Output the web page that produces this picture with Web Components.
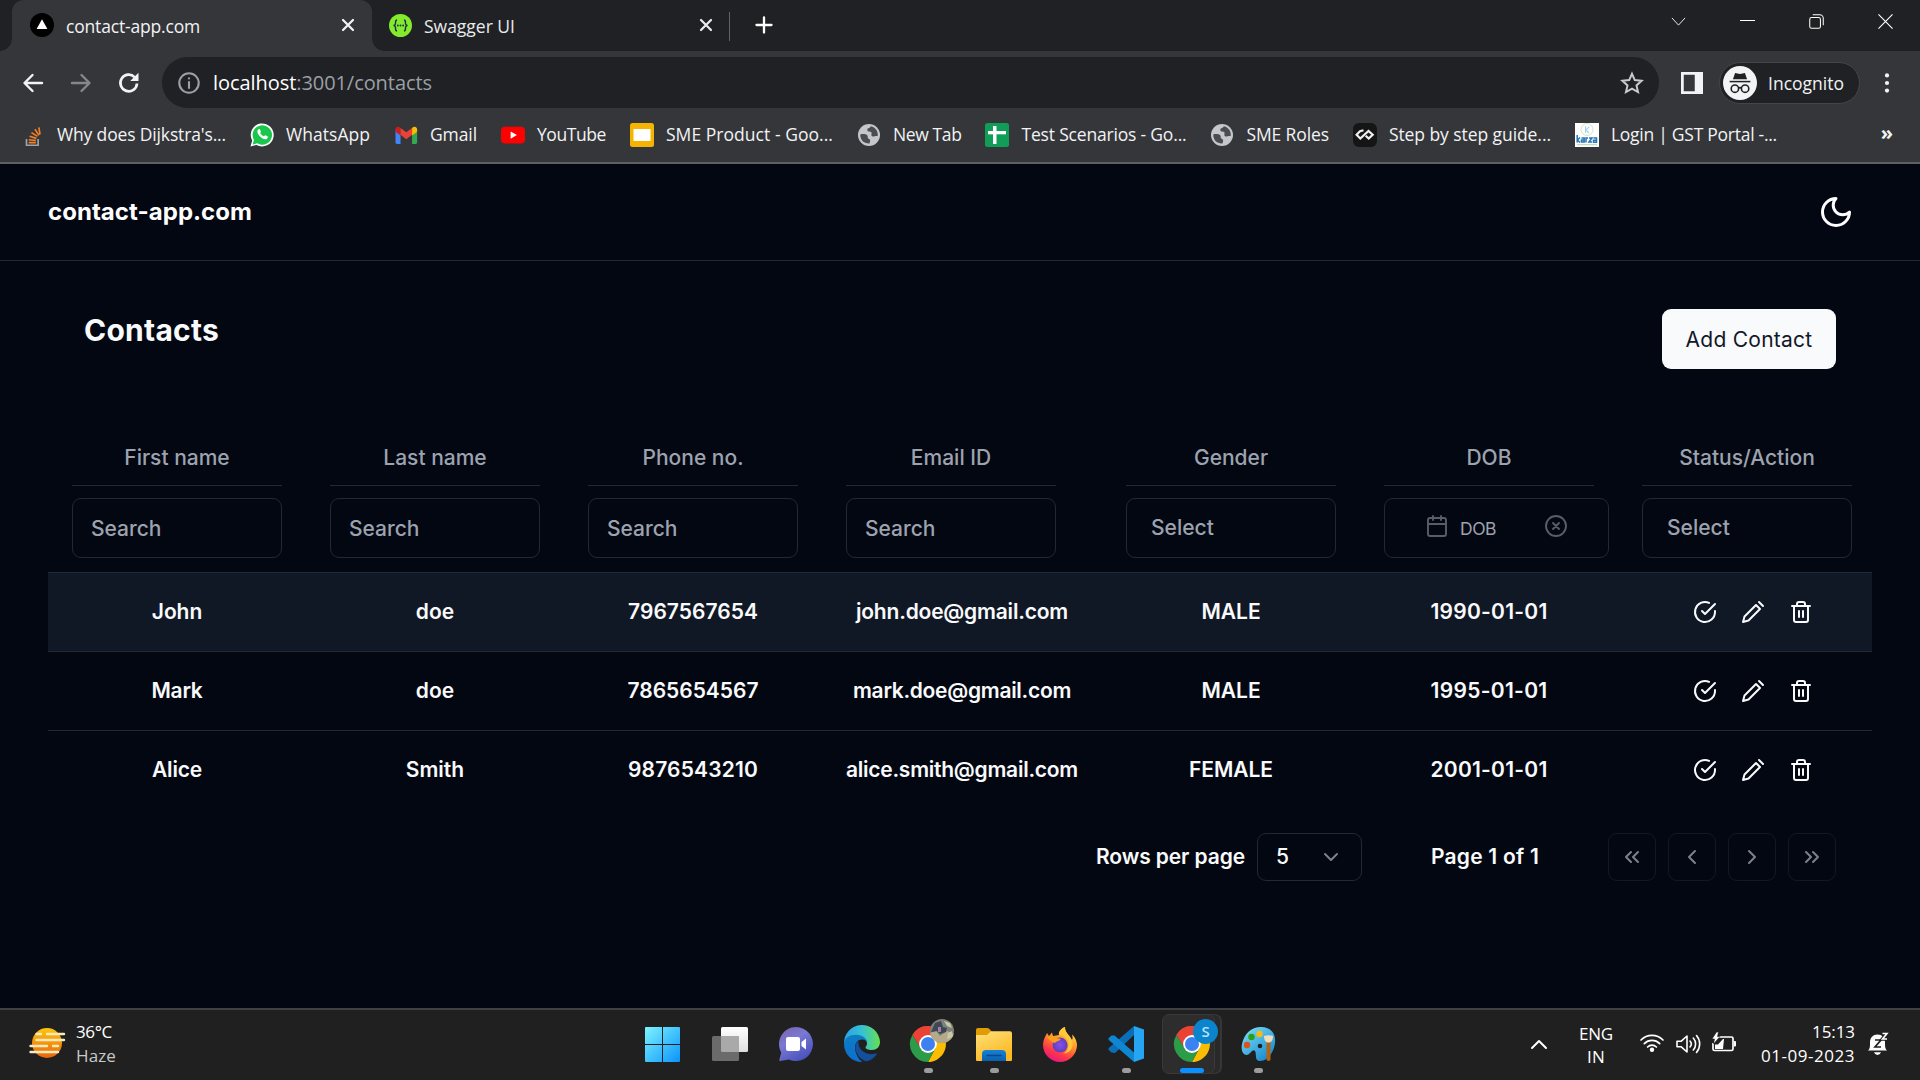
<!DOCTYPE html>
<html lang="en">
<head>
<meta charset="utf-8">
<title>contact-app.com</title>
<style>
html,body{margin:0;height:100%;background:#030712;overflow:hidden}
</style>
</head>
<body>
<desktop-screen></desktop-screen>
<script>
const stroke = (body, w = 2, vb = '0 0 24 24') => `<svg viewBox="${vb}" fill="none" stroke="currentColor" stroke-width="${w}" stroke-linecap="round" stroke-linejoin="round">${body}</svg>`;
const plain = (body, vb = '0 0 24 24') => `<svg viewBox="${vb}">${body}</svg>`;
const chromeLogo = `
<path d="M18 18 2.4 9A18 18 0 0 1 33.6 9Z" fill="#ea4335"/>
<path d="M18 9.5H33.8L33.6 9A18 18 0 0 0 2.4 9L10.6 22.3Z" fill="#ea4335"/>
<path d="M33.8 9.5H18L25.4 22.3 18 36A18 18 0 0 0 33.8 9.5Z" fill="#fbbc04"/>
<path d="M2.4 9 10.6 22.3A8.5 8.5 0 0 0 25 22.8L18 36A18 18 0 0 1 2.4 9Z" fill="#2d9c49"/>
<circle cx="18" cy="18" r="8.9" fill="#fff"/><circle cx="18" cy="18" r="7" fill="#3b82f0"/>`;
const ICONS = {
  vercel: plain('<circle cx="12" cy="12" r="12" fill="#000"/><path d="M12 6.2 17.4 16H6.6Z" fill="#fff"/>'),
  swagger: plain('<circle cx="12" cy="12" r="12" fill="#85ea2d"/><path d="M8.4 6.2C6.3 6.2 7 8.6 6.7 10.2 6.5 11.4 5.6 12 4.6 12 5.6 12 6.5 12.6 6.7 13.8 7 15.4 6.3 17.8 8.4 17.8M15.6 6.2C17.7 6.2 17 8.6 17.3 10.2 17.5 11.4 18.4 12 19.4 12 18.4 12 17.5 12.6 17.3 13.8 17 15.4 17.7 17.8 15.6 17.8" fill="none" stroke="#173647" stroke-width="1.5"/><g fill="#173647"><circle cx="9.2" cy="12" r="1"/><circle cx="12" cy="12" r="1"/><circle cx="14.8" cy="12" r="1"/></g>'),
  close: stroke('<path d="m6 6 12 12M18 6 6 18"/>', 2.7),
  plus: stroke('<path d="M12 3v18M3 12h18"/>', 2.8),
  back: stroke('<path d="M21 12H4M11.5 4 3.5 12l8 8"/>', 2.4),
  forward: stroke('<path d="M3 12h17M12.5 4l8 8-8 8"/>', 2.4),
  reload: plain('<path d="M20 12.5A8.3 8.3 0 1 1 17.6 6.1" fill="none" stroke="#f1f3f4" stroke-width="2.7"/><path d="M21.5 1.8V10h-8.3Z" fill="#f1f3f4"/>'),
  info: stroke('<circle cx="12" cy="12" r="10.6"/><path d="M12 11v6.5M12 6.8v.3"/>', 2.3),
  star: plain('<path d="m12 2.8 2.8 6.3 6.8.7-5.1 4.6 1.5 6.7-6-3.5-6 3.5 1.5-6.7-5.1-4.6 6.8-.7Z" fill="none" stroke="#c8cacd" stroke-width="2"/>'),
  panel: plain('<path d="M0 0h24v24H0ZM3 3v18h12V3Z" fill="#f1f3f4" fill-rule="evenodd"/>'),
  incognito: plain('<circle cx="18" cy="18" r="18" fill="#f1f3f4"/><path d="M12.8 7.3 18 8.5l5.2-1.2L25.5 14h-15Z" fill="#202124"/><path d="M7 16.5h22" stroke="#202124" stroke-width="1.6"/><g fill="none" stroke="#202124" stroke-width="1.7"><circle cx="12.6" cy="24" r="3.9"/><circle cx="23.4" cy="24" r="3.9"/><path d="M16.4 23.4q1.6-1 3.2 0"/></g>', '0 0 36 36'),
  dots: plain('<g fill="#f1f3f4"><circle cx="12" cy="3.7" r="2.3"/><circle cx="12" cy="12" r="2.3"/><circle cx="12" cy="20.3" r="2.3"/></g>'),
  winDown: plain('<path d="m.7 1 7.3 8L15.3 1" fill="none" stroke="#e8eaed" stroke-width="1.1"/>', '0 0 16 10'),
  winMin: plain('<path d="M0 4.5h15" stroke="#fff" stroke-width="1"/>', '0 0 15 10'),
  winMax: plain('<g fill="none" stroke="#fff" stroke-width="1.1"><rect x=".8" y="3.8" width="11.4" height="11.4" rx="2"/><path d="M4 .8h7.5a3.7 3.7 0 0 1 3.7 3.7V12"/></g>', '0 0 16 16'),
  winClose: plain('<path d="m.5.5 15 15M15.5.5l-15 15" stroke="#fff" stroke-width="1.2"/>', '0 0 16 16'),
  stack: plain('<g transform="translate(2.6 3.6) scale(.83)"><path d="M3.5 15v7.5h14V15" fill="none" stroke="#9da3a8" stroke-width="2"/><g stroke="#f48024" stroke-width="2"><path d="M6.2 19.3h8.6M6.3 15.8l8.5 1M7.2 11.7l8.2 2.5M9.5 7.2l7.2 4.6M13.6 3.3l5 7M18.4 1l1.4 8.3"/></g></g>'),
  whatsapp: plain('<path d="M.5 23.5 2.2 17.6A11.5 11.5 0 1 1 6.5 21.9Z" fill="#fff"/><path d="M2.6 21.5 4 17A9.7 9.7 0 1 1 7.3 20.3Z" fill="#1bc64c"/><path d="M8.5 6.3c.6-.5 1.3-.4 1.5.1l.9 2.1c.2.6-.9 1.3-.6 1.8.8 1.4 1.9 2.4 3.3 3 .6.3 1.2-1.2 1.8-1l2.1 1c.9.5 0 2.5-1.1 2.9-3.5 1.2-9.1-4.2-9-7.6 0-1 .5-1.8 1.1-2.3Z" fill="#fff"/>'),
  gmail: plain('<g transform="translate(1.5 1.5) scale(.9)"><path d="M0 5.5V20a1.6 1.6 0 0 0 1.6 1.6h4V11Z" fill="#4285f4"/><path d="M24 5.5V20a1.6 1.6 0 0 1-1.6 1.6h-4V11Z" fill="#34a853"/><path d="M5.6 4v8.3L0 8V5.5C0 2.5 3 1.8 5 3.3Z" fill="#c5221f"/><path d="M18.4 4v8.3L24 8V5.5c0-3-3-3.7-5-2.2Z" fill="#fbbc04"/><path d="M5.6 3.8 12 8.6l6.4-4.8v7.7L12 16.3l-6.4-4.8Z" fill="#ea4335"/></g>'),
  youtube: plain('<rect y="3.7" width="24" height="16.8" rx="4" fill="#f00"/><path d="m9.6 8.5 6.3 3.6-6.3 3.6Z" fill="#fff"/>'),
  slides: plain('<rect width="24" height="24" rx="2.5" fill="#f5b400"/><rect x="3.5" y="6" width="17" height="12" fill="#fff"/>'),
  globe: plain('<circle cx="12" cy="12" r="11" fill="#c3c6ca"/><path d="M3.3 11.5c1.7-.8 5.9-.6 7.1 1.1.9 1.4-.5 2.4 1.4 3.2 1.8.7 1.6 2.6.6 4.7C6.7 20.7 3 16.8 3.3 11.5ZM13.8 3.2c-.4 1.2-1.2 1.7-2.5 2.1-1.3.4-1.1 1.8-.6 2.7.6 1.1 2.8.2 3.6 1.3.9 1.3-.8 3 .9 4 1.3.8 2.9-.7 5.5-.3C21.4 8.5 18.6 4.3 13.8 3.2Z" fill="#4a4c50"/>'),
  sheets: plain('<rect width="24" height="24" rx="2.5" fill="#0f9d58"/><path d="M8 3h3.5v18H8Z" fill="#fff"/><path d="M3 8h18v3.3H3Z" fill="#fff"/>'),
  step: plain('<rect width="24" height="24" rx="6" fill="#151515"/><path d="M10.5 7.3 7 8.3 3.6 11.8 7.3 15.5 15.5 8l4.2 3.8-4 3.8-3-2.8" fill="none" stroke="#f0f0f0" stroke-width="2.2"/>'),
  karza: plain('<rect width="24" height="24" fill="#fff"/><circle cx="12" cy="6.5" r="6" fill="none" stroke="#d3e6c5"/><path d="M10.5 3v7M14 4l-3 3 3 3" fill="none" stroke="#a5d3ec" stroke-width="1.1"/><path d="M2.2 12v7.5M5 14.5 2.5 17l2.5 2.5M6.5 15h2.7v4H6.5v-2h2.5M11 19.5v-4.5h2M14 15h3l-3 4h3M18.5 15h3v4.2h-3v-2h3" fill="none" stroke="#2676b5" stroke-width="1.5"/><path d="M2 21.7h20" stroke="#b8d5a6"/>'),
  moon: stroke('<path d="M12 3a6 6 0 0 0 9 9 9 9 0 1 1-9-9Z"/>'),
  check: stroke('<path d="M22 11.08V12a10 10 0 1 1-5.93-9.14"/><path d="m9 11 3 3L22 4"/>'),
  pencil: stroke('<path d="m18 2 4 4M7.5 20.5 19 9l-4-4L3.5 16.5 2 22Z"/>'),
  trash: stroke('<path d="M3 6h18M19 6v14c0 1-1 2-2 2H7c-1 0-2-1-2-2V6M8 6V4c0-1 1-2 2-2h4c1 0 2 1 2 2v2M10 11v6M14 11v6"/>'),
  calendar: stroke('<rect x="3" y="4" width="18" height="18" rx="2"/><path d="M16 2v4M8 2v4M3 10h18"/>', 1.9),
  clear: stroke('<circle cx="12" cy="12" r="10"/><path d="m15 9-6 6M9 9l6 6"/>', 1.9),
  down: stroke('<path d="m6 9 6 6 6-6"/>'),
  first: stroke('<path d="m11 17-5-5 5-5M18 17l-5-5 5-5"/>'),
  prev: stroke('<path d="m15 18-6-6 6-6"/>'),
  next: stroke('<path d="m9 18 6-6-6-6"/>'),
  last: stroke('<path d="m13 17 5-5-5-5M6 17l5-5-5-5"/>'),
  haze: plain('<defs><linearGradient id="a" x2="0" y2="1"><stop stop-color="#fdc60f"/><stop offset="1" stop-color="#e8650a"/></linearGradient></defs><circle cx="18" cy="15" r="15" fill="url(#a)"/><g stroke="#fbe9bd" stroke-width="2.4" stroke-linecap="round"><path d="M7.5 6H12M18 6h17M7.5 12H35M1.5 18H18M24 18h5M1.5 24H29"/></g>', '0 0 37 31'),
  windows: plain('<defs><linearGradient id="a" gradientUnits="userSpaceOnUse" x2="35" y2="35"><stop stop-color="#7df3ff"/><stop offset="1" stop-color="#0a94fb"/></linearGradient></defs><path d="M0 1q0-1 1-1h16v17H0ZM18 0h16q1 0 1 1v16H18ZM0 18h17v17H1q-1 0-1-1ZM18 18h17v16q0 1-1 1H18Z" fill="url(#a)"/>', '0 0 35 35'),
  tasks: plain('<defs><linearGradient id="a" x2="0" y2="1"><stop stop-color="#fff"/><stop offset="1" stop-color="#dedede"/></linearGradient></defs><rect x="9" width="27" height="25" rx="1.5" fill="url(#a)"/><rect y="9" width="27" height="25" rx="1.5" fill="#6b6b6b"/><path d="M9 9h18v16H10.5Q9 25 9 23.5Z" fill="#a9a9a9"/>', '0 0 36 34'),
  chat: plain('<defs><linearGradient id="a" x2=".6" y2="1"><stop stop-color="#7b5fa8"/><stop offset=".45" stop-color="#7a79d4"/><stop offset="1" stop-color="#4b53bc"/></linearGradient></defs><path d="M17 0a17 17 0 1 1-7 32.5L1 34q-1 0-.7-1.2L2.3 25.5A17 17 0 0 1 17 0Z" fill="url(#a)"/><rect x="7" y="10" width="14" height="14" rx="2" fill="#fff"/><path d="m22.5 15 4.5-3.5v11L22.5 19Z" fill="#fff"/>', '0 0 34 34'),
  edge: plain('<defs><linearGradient id="a"><stop stop-color="#28a3e8"/><stop offset=".5" stop-color="#35c1d3"/><stop offset="1" stop-color="#66e04f"/></linearGradient><linearGradient id="b" x2="0" y2="1"><stop stop-color="#0f7cc2"/><stop offset="1" stop-color="#0c6fd0"/></linearGradient></defs><path d="M0 18A18 18 0 0 1 36 16c0 5-3.5 8-8 8-4 0-6.5-1.2-6.5-2.5 0-1 1.5-1.5 1.5-4C23 13 18 9.5 12 9.5S2 13 0 18Z" fill="url(#a)"/><path d="M0 18C0 12 6 8.8 12 8.8c7 0 11 4.2 11 8.2 0-2-2.5-3.5-5-3.5-4 0-7 3.5-7 8C11 29 17 36 19 36 8 36.5 0 28 0 18Z" fill="url(#b)"/><path d="M14.5 15c-3 2-4 6-2.5 10.5 2 6 8 10 11 9.8 4-1 8-4 10.5-8.3-3 1.2-7 1.7-10.5.5-5-1.5-9-6-8.5-12.5Z" fill="#124f9c"/>', '0 0 36 36'),
  chrome: plain(chromeLogo, '0 0 36 36'),
  avatar: plain('<defs><clipPath id="c"><circle cx="12" cy="12" r="12"/></clipPath></defs><g clip-path="url(#c)"><path fill="#7d8179" d="M0 0h24v24H0Z"/><path fill="#b5a98c" d="M0 14 6 12 10 17 17 12 24 15V24H0Z"/><path fill="#3f4658" d="M5 4 11 2 13 8 17 9 16 13 10 15 7 12 1 13Z"/><path fill="#c7c9a8" d="M14 2 20 4 22 9 17 7ZM18 14 22 12 23 18 17 20Z"/><path fill="#9f8295" d="M8 8h3v5H8Z"/></g>'),
  explorer: plain('<defs><linearGradient id="a" x2=".5" y2="1"><stop stop-color="#ffe07c"/><stop offset="1" stop-color="#fbb91f"/></linearGradient><linearGradient id="b" x2="0" y2="1"><stop stop-color="#1583d8"/><stop offset="1" stop-color="#0b5fae"/></linearGradient></defs><path d="M0 2q0-2 2-2h9q1.5 0 2.5 1l2 2.2L12 9H0Z" fill="#e09c02"/><path d="M0 7h11l4-3.8h19q2 0 2 2V32q0 1-1 1H1q-1 0-1-1Z" fill="url(#a)"/><path d="M6 33V26q0-4 4-4h16q4 0 4 4v7Z" fill="url(#b)"/><path d="M10.5 27.5h15" stroke="#08478b" stroke-width="1.5"/>', '0 0 36 33'),
  firefox: plain('<defs><linearGradient id="a" x1=".8" x2=".3" y2="1"><stop stop-color="#fff44f"/><stop offset=".4" stop-color="#ff9a28"/><stop offset=".75" stop-color="#ff3647"/><stop offset="1" stop-color="#e31587"/></linearGradient><radialGradient id="b"><stop stop-color="#8b4fe6"/><stop offset="1" stop-color="#5b3fc0"/></radialGradient></defs><path d="M2 10 4 6 6 9 9 5.5 10 9 16 8C15 4 19 1 22 0 21 5 27 8 29 13 30 11 29.5 9 29 7.5 33 11 34 16 34 18A17 17 0 0 1 0 18C0 15 1 12 2 10Z" fill="url(#a)"/><circle cx="17" cy="18" r="7.5" fill="url(#b)"/><path d="M4 10c3-1.500 7-1 9 1 2 .5 4 .3 4.5 1-.5 2-3.5 2-5 3.5C10.5 17 7 13 4 10Z" fill="#ff9f1c"/><path d="M16 8c4-1 9 3 9.5 9 .3 4-2 8-5 9.5 6-.5 10-5 9-11C28.5 10 22 7 22 0c-3 1-6 4-6 8Z" fill="#ffc83a"/>', '0 0 34 35'),
  vscode: plain('<path d="M26 0v9L7 27 3.5 26.5.8 24Q-.2 23 .8 22Z" fill="#0a6fb8"/><path d="M26 36v-9.500L6.5 9.5 3.5 9.5.8 12Q-.2 13 .8 14Z" fill="#0f86d2"/><path d="M26 0 36 3.500v29L26 36Z" fill="#25a5f2"/>', '0 0 36 36'),
  paint: plain('<defs><linearGradient id="a" x2=".8" y2="1"><stop stop-color="#7ee3f7"/><stop offset="1" stop-color="#1586cf"/></linearGradient></defs><path d="M20 0C31 0 35 8 34 16 33 26 26 34 19 34c-6 0-3-7-5-10-3-3-5 5-9 4C1 27 0 22 1 17 3 7 10 0 20 0Z" fill="url(#a)"/><circle cx="6" cy="18" r="3.2" fill="#e2501a"/><circle cx="10.5" cy="10" r="3.2" fill="#2f9e14"/><circle cx="18.5" cy="7" r="3.2" fill="#fbb90f"/><circle cx="19" cy="19" r="2.3" fill="#202020"/><path d="M25.5 14h4v19q-2 2-4 0Z" fill="#b5610e"/><path d="M23 9q4.5-1.5 9 0 0 5-3 6.5h-3Q23 14 23 9Z" fill="#f3dcb8"/>', '0 0 35 34'),
  up: stroke('<path d="m1 9 7-7 7 7"/>', 2, '0 0 16 10'),
  wifi: plain('<g fill="none" stroke="#fff" stroke-width="1.7" stroke-linecap="round"><path d="M1 7a15.5 15.5 0 0 1 22 0M4.3 10.6a10.8 10.8 0 0 1 15.4 0M7.6 14a6.2 6.2 0 0 1 8.8 0"/></g><circle cx="12" cy="16.7" r="2.2" fill="#fff"/>', '0 0 24 20'),
  volume: plain('<g fill="none" stroke="#fff" stroke-width="1.6" stroke-linecap="round" stroke-linejoin="round"><path d="M1 7.3h4L11 2v16l-6-5.3H1Z"/><path d="M14 7a4.5 4.5 0 0 1 0 6M17.3 4a9 9 0 0 1 0 12M20.5 1.5a13 13 0 0 1 0 17"/></g>', '0 0 24 20'),
  battery: plain('<path d="M7 5H19.5q1.5 0 1.5 1.5V17q0 1.5-1.5 1.5H2.5Q1 18.5 1 17v-6" fill="none" stroke="#fff" stroke-width="1.7"/><path d="M22 9h1q1 0 1 1v3.5q0 1-1 1h-1Z" fill="#fff"/><path d="M3 12.5h3L11 7h1l-1 10H3Z" fill="#fff"/><path d="M4.5 0 0 7h2.5L1.5 12 8 4.5H5.5L6.5 0Z" fill="#fff" stroke="#202020" stroke-width=".6"/>', '0 0 24 20'),
  bell: plain('<path d="M1 18.5c2-1.5 2-4 2-8 0-5 3-8 7.5-8s7.5 3 7.5 8c0 4 0 6.5 2 8ZM7 20.3h7q-.8 2.7-3.5 2.7T7 20.3Z" fill="#fff"/><path d="M8 8h6l-6 7h6" fill="none" stroke="#202020" stroke-width="1.7"/><path d="M15.5 1.5H20L15.5 7H20" fill="none" stroke="#202020" stroke-width="3.6"/><path d="M15.5 1.5H20L15.5 7H20" fill="none" stroke="#fff" stroke-width="1.6"/>', '0 0 22 24'),
};

const define = (name, css, html, after) => customElements.define(name, class extends HTMLElement {
  connectedCallback() {
    if (this.shadowRoot) return;
    const root = this.attachShadow({ mode: 'open' });
    const t = document.createElement('template');
    t.innerHTML = `<style>*{box-sizing:border-box}:host{box-sizing:border-box;display:block}${css}</style>${typeof html === 'function' ? html(this) : html}`;
    root.appendChild(t.content.cloneNode(true));
    if (after) after(this, root);
  }
});

/* Icon: name plus optional width (s) and height (h). */
define('ui-icon', ':host{flex:none}svg{display:block;width:100%;height:100%;overflow:visible}', el => {
  const s = el.getAttribute('s') || 24;
  el.style.width = s + 'px';
  el.style.height = (el.getAttribute('h') || s) + 'px';
  return ICONS[el.getAttribute('name')];
});

/* One-line label whose tracking is adjusted to reach the width w. */
define('fit-text', ':host{display:inline-block;white-space:nowrap;flex:none}', '<slot></slot>', el => {
  const w = +el.getAttribute('w');
  if (!w || !el.textContent.length) return;
  const gap = (w - el.getBoundingClientRect().width) / el.textContent.length;
  el.style.letterSpacing = gap.toFixed(3) + 'px';
});

define('browser-tab', `
:host{display:flex;align-items:center;height:51px;color:#e8eaed;font:17.5px/24px "Open Sans",sans-serif;padding:0 14px 1px 18px}
:host([active]){width:360px;background:#35363a;border-radius:12px 12px 0 0;color:#f1f3f4;position:relative}
:host([active])::before,:host([active])::after{content:"";position:absolute;bottom:0;width:12px;height:12px}
:host([active])::before{left:-12px;background:radial-gradient(circle at 0 0,transparent 11.5px,#35363a 12px)}
:host([active])::after{right:-12px;background:radial-gradient(circle at 100% 0,transparent 11.5px,#35363a 12px)}
fit-text{margin:1px auto 0 12px}`, el => `
<ui-icon name="${el.getAttribute('icon')}" s="${el.getAttribute('s')}"></ui-icon><fit-text w="${el.getAttribute('w')}">${el.getAttribute('label')}</fit-text><ui-icon name="close" s="20"></ui-icon>`);

define('tab-strip', `
:host{display:flex;height:51px;background:#202124;padding-left:12px}
browser-tab:nth-of-type(2){width:357px;padding-left:17px;padding-right:13px}
.sep{width:1px;height:29px;background:#606266;margin-top:12px}
.plus{margin:15px 0 0 24px;color:#fff}
.win{margin-left:auto;display:flex;align-items:center;height:43px;padding-right:27px}
.win ui-icon+ui-icon{margin-left:54px}.win ui-icon:nth-child(-n+2){margin-top:-1px}`, `
<browser-tab active icon="vercel" s="24" label="contact-app.com" w="134"></browser-tab>
<browser-tab icon="swagger" s="23" label="Swagger UI" w="91"></browser-tab>
<div class="sep"></div><ui-icon class="plus" name="plus" s="20"></ui-icon>
<div class="win"><ui-icon name="winDown" s="15" h="9"></ui-icon><ui-icon name="winMin" s="15" h="10"></ui-icon><ui-icon name="winMax" s="15"></ui-icon><ui-icon name="winClose" s="15"></ui-icon></div>`);

define('tool-bar', `
:host{display:flex;align-items:center;height:63px;background:#35363a;padding:0 20px 0 21px;color:#f1f3f4}
.f{color:#85878a;margin:0 24px}
.box{display:flex;align-items:center;width:1497px;height:51px;margin-left:21px;border-radius:26px;background:#202124;padding:0 15px 0 16px;color:#9aa0a6;font:20px/26px "Open Sans",sans-serif}
.box fit-text{margin-left:13px}.box b{font-weight:400;color:#fff}.box ui-icon:last-child{margin-left:auto}
.panel{margin:0 16px 0 22px}
.pill{display:flex;align-items:center;width:141px;height:42px;border:1.5px solid #434549;border-radius:21px;background:#202124;padding-left:3px;font:17.5px/24px "Open Sans",sans-serif}
.pill fit-text{margin-left:11px}
.dots{margin-left:16px}`, `
<ui-icon name="back" s="24"></ui-icon><ui-icon class="f" name="forward" s="24"></ui-icon><ui-icon name="reload" s="24"></ui-icon>
<div class="box"><ui-icon name="info" s="22"></ui-icon><fit-text w="219"><b>localhost</b>:3001/contacts</fit-text><ui-icon name="star" s="24"></ui-icon></div>
<ui-icon class="panel" name="panel" s="22"></ui-icon>
<div class="pill"><ui-icon name="incognito" s="34"></ui-icon><fit-text w="76">Incognito</fit-text></div>
<ui-icon class="dots" name="dots" s="22"></ui-icon>`);

define('bookmark-item', `
:host{display:flex;align-items:center;gap:12px;flex:none;font:17.5px/24px "Open Sans",sans-serif;color:#f1f3f4}fit-text{margin-top:-1px}`, el => `
<ui-icon name="${el.getAttribute('icon')}" s="24"></ui-icon><fit-text w="${el.getAttribute('w')}">${el.getAttribute('label')}</fit-text>`);

define('bookmark-bar', `
:host{display:flex;align-items:center;height:50px;background:#35363a;border-bottom:2px solid #5f6064;padding:0 27px 7px 21px;gap:24px}
.more{font:bold 20px/22px "Open Sans",sans-serif;color:#f1f3f4;margin-left:auto;margin-top:-4px}`, `
<bookmark-item icon="stack" w="169" label="Why does Dijkstra's..."></bookmark-item>
<bookmark-item icon="whatsapp" w="84" label="WhatsApp"></bookmark-item>
<bookmark-item icon="gmail" w="47" label="Gmail"></bookmark-item>
<bookmark-item icon="youtube" w="69" label="YouTube"></bookmark-item>
<bookmark-item icon="slides" w="167" label="SME Product - Goo..."></bookmark-item>
<bookmark-item icon="globe" w="68.5" label="New Tab"></bookmark-item>
<bookmark-item icon="sheets" w="165" label="Test Scenarios - Go..."></bookmark-item>
<bookmark-item icon="globe" w="82.5" label="SME Roles"></bookmark-item>
<bookmark-item icon="step" w="162" label="Step by step guide..."></bookmark-item>
<bookmark-item icon="karza" w="166" label="Login | GST Portal -..."></bookmark-item>
<span class="more">»</span>`);

define('app-header', `
:host{display:flex;align-items:center;justify-content:space-between;height:97px;padding:0 66px 0 48px;border-bottom:1px solid #1f2937;color:#fff;font:700 24px/36px Inter,sans-serif}`, `
<fit-text w="204">contact-app.com</fit-text><ui-icon name="moon" s="36"></ui-icon>`);

define('page-title', `
:host{display:flex;justify-content:space-between;padding:48px 84px 0;height:164px}
h1{margin:0;font:700 30px/42px Inter,sans-serif;color:#f9fafb}
.btn{height:60px;width:174px;border-radius:9px;background:#f9fafb;color:#111827;font:400 21px/61px Inter,sans-serif;text-align:center}`, `
<h1><fit-text w="135">Contacts</fit-text></h1><div class="btn"><fit-text w="127">Add Contact</fit-text></div>`);

define('column-filter', `
:host{width:210px;flex:none;color:#9ca3af;font:500 21px/30px Inter,sans-serif}
.h{height:61px;border-bottom:1px solid #1f2937;text-align:center;padding-top:18px}
.f{display:flex;align-items:center;height:60px;margin-top:12px;border:1px solid #1f2937;border-radius:9px;padding:2px 0 0 18px}
.sel{padding:0 0 0 24px}
.date{width:225px;padding:0 0 0 40px;font-size:17.5px;font-weight:400}
.date ui-icon{color:#585d67;margin-top:-4px}.date fit-text{margin:1px auto 0 11px}.date ui-icon:last-child{margin-right:40px}`, el => {
  const k = el.getAttribute('kind') || 'search';
  const f = { search: '<div class="f"><span>Search</span></div>', select: '<div class="f sel"><span>Select</span></div>',
    date: '<div class="f date"><ui-icon name="calendar"></ui-icon><fit-text w="36">DOB</fit-text><ui-icon name="clear"></ui-icon></div>' }[k];
  return `<div class="h"><slot></slot></div>${f}`;
});

define('contact-row', `
:host{display:grid;grid-template-columns:258px 258px 258px 280px 258px 258px 258px;height:79px;width:1824px;overflow:hidden;border-bottom:1px solid #1f2937;color:#f9fafb;font:600 21px/77px Inter,sans-serif;text-align:center}
:host([hover]){background:#111825}:host([last]){border-color:transparent}
.a{display:flex;gap:24px;align-items:center;justify-content:flex-end;padding-right:63px}`, el => `
${el.getAttribute('data').split('|').map(t => { const [s, w] = t.split('~'); return `<span><fit-text w="${w || ''}">${s}</fit-text></span>`; }).join('')}
<div class="a"><ui-icon name="check"></ui-icon><ui-icon name="pencil"></ui-icon><ui-icon name="trash"></ui-icon></div>`);

define('contact-table', `
:host{margin:0 48px}
.head{display:flex;gap:48px;height:148px;padding-left:24px;border-bottom:1px solid #1f2937}
.wide{margin-right:22px}`, `
<div class="head"><column-filter>First name</column-filter><column-filter>Last name</column-filter><column-filter>Phone no.</column-filter><column-filter class="wide">Email ID</column-filter><column-filter kind="select">Gender</column-filter><column-filter kind="date">DOB</column-filter><column-filter kind="select">Status/Action</column-filter></div>
<contact-row hover data="John~50.5|doe|7967567654~130|john.doe@gmail.com~212|MALE|1990-01-01~117"></contact-row>
<contact-row data="Mark~51|doe|7865654567~131|mark.doe@gmail.com~218|MALE|1995-01-01~117"></contact-row>
<contact-row last data="Alice~50|Smith|9876543210~130|alice.smith@gmail.com~232|FEMALE~84|2001-01-01~117"></contact-row>`);

define('table-pager', `
:host{display:flex;align-items:center;justify-content:flex-end;margin:23px 84px 0;height:48px;color:#f9fafb;font:600 21px/48px Inter,sans-serif}
.n{display:flex;align-items:center;justify-content:space-between;width:105px;height:48px;border:1px solid #1f2937;border-radius:9px;margin:0 69px 0 12px;padding:0 18px;font-weight:500}
.n ui-icon{color:#7e8188}
.b{display:flex;gap:12px;margin-left:69px}
.b div{width:48px;height:48px;border:1px solid #111825;border-radius:9px;display:grid;place-items:center;color:#7e8188}`, `
<fit-text w="149">Rows per page</fit-text><div class="n"><span>5</span><ui-icon name="down"></ui-icon></div><fit-text w="108">Page 1 of 1</fit-text>
<div class="b"><div><ui-icon name="first"></ui-icon></div><div><ui-icon name="prev"></ui-icon></div><div><ui-icon name="next"></ui-icon></div><div><ui-icon name="last"></ui-icon></div></div>`);

define('task-app', `
:host{width:60px;height:60px;border-radius:7px;flex:none;position:relative;display:grid;place-items:center}
:host([current]){background:#2d2d2d;border:1px solid #393939;width:53px;box-shadow:6px 0 0 -1px #292929,7px 0 0 0 #363636;margin:0 7px 0 0;padding-left:7px}
.badge{position:absolute;left:32px;top:5px}
:host([current]) .badge{left:30px;top:4px;width:25px;height:25px;border-radius:50%;background:#0a84cc;color:#b8e1fa;font:600 15px/25px "Open Sans",sans-serif;text-align:center}
i{position:absolute;left:calc(50% - 4px);bottom:1px;width:9px;height:5px;border-radius:3px;background:#9c9c9c}
:host([current]) i{width:24px;left:17px;bottom:0;background:#0a90ff}`, el => `
<ui-icon name="${el.getAttribute('icon')}" s="${el.getAttribute('s')}" h="${el.getAttribute('h') || el.getAttribute('s')}"></ui-icon><slot></slot>
${el.hasAttribute('avatar') ? '<ui-icon class="badge" name="avatar" s="24"></ui-icon>' : ''}${el.hasAttribute('current') ? '<div class="badge">S</div>' : ''}${el.hasAttribute('running') ? '<i></i>' : ''}`);

define('task-bar', `
:host{display:grid;grid-template-columns:632px 1fr 389px;height:72px;background:#202020;border-top:2px solid #3f4044;color:#fff;font:17px/24px "Open Sans",sans-serif}
.w{display:flex;padding:18px 0 0 29px;gap:10px}.w div,.t div{margin-top:-8px}.w fit-text{display:block}.g{color:#c8c8c8}
.apps{display:flex;gap:6px;padding-top:4px}.apps task-app:first-child{margin-right:2px}
.t{display:flex;align-items:flex-start;padding-top:18px}
.t div{text-align:right}.t .l{text-align:center;margin:-6px 27px 0 32px;line-height:23px}.t fit-text{display:block;width:max-content;margin-left:auto}.l fit-text{margin-right:auto}`, `
<div class="w"><ui-icon name="haze" s="37" h="31"></ui-icon><div><fit-text w="38">36°C</fit-text><fit-text class="g" w="40">Haze</fit-text></div></div>
<div class="apps"><task-app icon="windows" s="35"></task-app><task-app icon="tasks" s="36" h="34"></task-app><task-app icon="chat" s="34"></task-app><task-app icon="edge" s="36"></task-app><task-app icon="chrome" s="36" running avatar></task-app><task-app icon="explorer" s="36" h="33" running></task-app><task-app icon="firefox" s="34" h="35"></task-app><task-app icon="vscode" s="36" running></task-app><task-app icon="chrome" s="36" running current></task-app><task-app icon="paint" s="35" h="34" running></task-app></div>
<div class="t"><ui-icon name="up" s="16" h="10" style="margin-top:11px"></ui-icon><div class="l"><fit-text w="34">ENG</fit-text><fit-text w="18">IN</fit-text></div>
<ui-icon name="wifi" s="24" h="20" style="margin-top:5px"></ui-icon><ui-icon name="volume" s="24" h="20" style="margin:6px 12px 0"></ui-icon><ui-icon name="battery" s="24" h="20" style="margin-top:4px"></ui-icon>
<div style="margin-left:25px"><fit-text w="43">15:13</fit-text><fit-text w="94">01-09-2023</fit-text></div><ui-icon name="bell" s="22" h="24" style="margin:4px 0 0 12px"></ui-icon></div>`);

define('desktop-screen', `
:host{display:flex;flex-direction:column;width:1920px;height:1080px;overflow:hidden;background:#030712}
main{flex:1;overflow:hidden}`, `
<tab-strip></tab-strip><tool-bar></tool-bar><bookmark-bar></bookmark-bar>
<main><app-header></app-header><page-title></page-title><contact-table></contact-table><table-pager></table-pager></main>
<task-bar></task-bar>`);
</script>
</body>
</html>
